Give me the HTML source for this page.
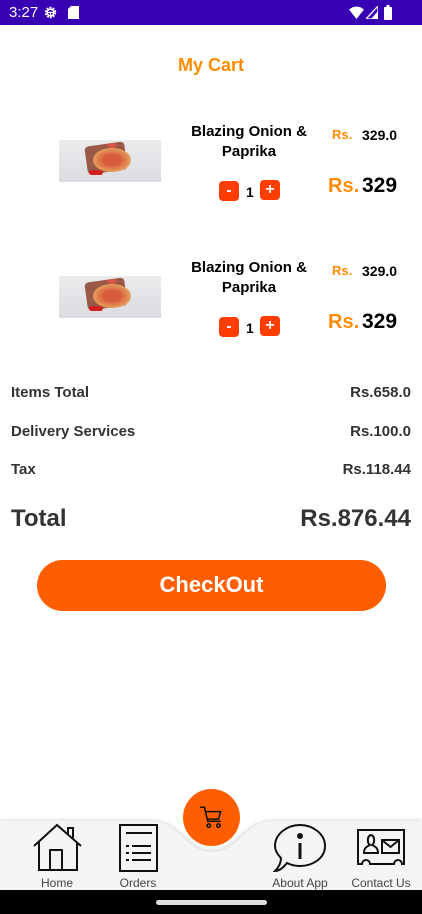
<!DOCTYPE html>
<html><head><meta charset="utf-8"><style>
*{margin:0;padding:0;box-sizing:border-box}
body{width:422px;height:914px;background:#fff;font-family:"Liberation Sans",Roboto,sans-serif;position:relative;overflow:hidden}
.a{position:absolute;white-space:nowrap}
.sb{left:0;top:0;width:422px;height:25px;background:#3700b3;color:#fff}
.name{width:140px;left:179px;text-align:center;font-weight:bold;font-size:15px;line-height:20px;color:#000}
.btn{width:20px;height:20px;background:#ff3d00;border-radius:4px;color:#fff;font-weight:bold;font-size:16px;text-align:center;line-height:19px}
.lbl{font-weight:bold;font-size:15px;color:#333}
.nl{font-size:12px;color:#444;text-align:center}
</style></head><body>
<div class="a sb">
 <span class="a" style="left:9px;top:4px;font-size:15px">3:27</span>
 <svg class="a" style="left:43px;top:5px" width="15" height="15" viewBox="0 0 16 16"><circle cx="8" cy="8" r="5" fill="none" stroke="#fff" stroke-width="2.2" stroke-dasharray="2 1.2"/><circle cx="8" cy="8" r="3.5" fill="none" stroke="#fff" stroke-width="1.5"/><path d="M5 8h6M8 8v3" stroke="#fff" stroke-width="1.3"/></svg>
 <svg class="a" style="left:68px;top:6px" width="11" height="13" viewBox="0 0 11 13"><path d="M3 0h8v13H0V3z" fill="#fff"/></svg>
 <svg class="a" style="left:349px;top:6px" width="15" height="13" viewBox="0 0 15 13"><path d="M0 3.5Q7.5-2.5 15 3.5L7.5 13z" fill="#fff"/></svg>
 <svg class="a" style="left:366px;top:6px" width="12" height="13" viewBox="0 0 12 13"><path d="M12 0V13H0z" fill="none" stroke="#fff" stroke-width="1.3"/><path d="M12 5V13H5z" fill="#fff"/></svg>
 <svg class="a" style="left:384px;top:5px" width="8" height="15" viewBox="0 0 8 15"><rect x="0" y="2" width="8" height="13" rx="1" fill="#fff"/><rect x="2.5" y="0" width="3" height="2" fill="#fff"/></svg>
</div>
<div class="a" style="left:0;top:55px;width:422px;text-align:center;color:#ff8c00;font-weight:bold;font-size:18px">My Cart</div>

<div class="a" style="left:0;top:0;width:422px;height:220px">
 <div class="a" style="left:59px;top:140px;width:102px;height:42px;background:linear-gradient(#ebebee,#dcdce0);overflow:hidden">
  <div class="a" style="left:27px;top:4px;width:40px;height:28px;background:#9a5a48;border-radius:4px;transform:rotate(-8deg)"></div>
  <div class="a" style="left:34px;top:8px;width:38px;height:24px;border-radius:50%;background:radial-gradient(#d85a3a 30%,#e8a860 75%)"></div>
  <div class="a" style="left:30px;top:30px;width:14px;height:5px;background:#d02020;border-radius:3px"></div>
  <div class="a" style="left:49px;top:3px;width:8px;height:5px;background:#e05040;border-radius:50%"></div>
 </div>
 <div class="a name" style="top:122px">Blazing Onion &amp;<br>Paprika</div>
 <span class="a" style="left:332px;top:127px;color:#ff8c00;font-weight:bold;font-size:13px">Rs.</span>
 <span class="a" style="left:362px;top:127px;font-size:14px;font-weight:bold;color:#000">329.0</span>
 <div class="a btn" style="left:219px;top:181px">-</div>
 <span class="a" style="left:246px;top:184px;font-size:14px;font-weight:bold">1</span>
 <div class="a btn" style="left:260px;top:180px">+</div>
 <span class="a" style="left:328px;top:175px;color:#ff8c00;font-weight:bold;font-size:20px">Rs.</span>
 <span class="a" style="left:362px;top:174px;font-size:21px;font-weight:bold;color:#000">329</span>
</div>
<div class="a" style="left:0;top:136px;width:422px;height:220px">
 <div class="a" style="left:59px;top:140px;width:102px;height:42px;background:linear-gradient(#ebebee,#dcdce0);overflow:hidden">
  <div class="a" style="left:27px;top:4px;width:40px;height:28px;background:#9a5a48;border-radius:4px;transform:rotate(-8deg)"></div>
  <div class="a" style="left:34px;top:8px;width:38px;height:24px;border-radius:50%;background:radial-gradient(#d85a3a 30%,#e8a860 75%)"></div>
  <div class="a" style="left:30px;top:30px;width:14px;height:5px;background:#d02020;border-radius:3px"></div>
  <div class="a" style="left:49px;top:3px;width:8px;height:5px;background:#e05040;border-radius:50%"></div>
 </div>
 <div class="a name" style="top:122px">Blazing Onion &amp;<br>Paprika</div>
 <span class="a" style="left:332px;top:127px;color:#ff8c00;font-weight:bold;font-size:13px">Rs.</span>
 <span class="a" style="left:362px;top:127px;font-size:14px;font-weight:bold;color:#000">329.0</span>
 <div class="a btn" style="left:219px;top:181px">-</div>
 <span class="a" style="left:246px;top:184px;font-size:14px;font-weight:bold">1</span>
 <div class="a btn" style="left:260px;top:180px">+</div>
 <span class="a" style="left:328px;top:175px;color:#ff8c00;font-weight:bold;font-size:20px">Rs.</span>
 <span class="a" style="left:362px;top:174px;font-size:21px;font-weight:bold;color:#000">329</span>
</div>

<span class="a lbl" style="left:11px;top:384px">Items Total</span><span class="a lbl" style="right:11px;top:384px">Rs.658.0</span>
<span class="a lbl" style="left:11px;top:423px">Delivery Services</span><span class="a lbl" style="right:11px;top:423px">Rs.100.0</span>
<span class="a lbl" style="left:11px;top:461px">Tax</span><span class="a lbl" style="right:11px;top:461px">Rs.118.44</span>
<span class="a lbl" style="left:11px;top:505px;font-size:24px">Total</span><span class="a lbl" style="right:11px;top:505px;font-size:24px">Rs.876.44</span>
<div class="a" style="left:37px;top:560px;width:349px;height:51px;border-radius:26px;background:#ff5e00;color:#fff;font-weight:bold;font-size:22px;text-align:center;line-height:50px">CheckOut</div>

<svg class="a" style="left:0;top:812px" width="422" height="78" viewBox="0 0 422 78">
 <defs><filter id="s" x="-10%" y="-50%" width="120%" height="200%"><feGaussianBlur stdDeviation="2"/></filter></defs>
 <path d="M0 10H150C180 10 185 40 212 40C239 40 244 10 274 10H422" fill="none" stroke="#ccc" stroke-width="3" filter="url(#s)"/>
 <path d="M0 9H150C180 9 185 40 212 40C239 40 244 9 274 9H422V78H0Z" fill="#f5f5f5"/>
</svg>
<div class="a" style="left:183px;top:789px;width:57px;height:57px;border-radius:50%;background:#ff5e00"></div>
<svg class="a" style="left:198px;top:803px" width="28" height="28" viewBox="0 0 26 26" fill="none" stroke="#111" stroke-width="1.4"><path d="M2 4h4l3 13h12M7 8h14l-2 7H9"/><circle cx="10" cy="21" r="1.6"/><circle cx="19" cy="21" r="1.6"/></svg>

<svg class="a" style="left:32px;top:823px" width="52" height="50" viewBox="0 0 52 50" fill="none" stroke="#111" stroke-width="2"><path d="M2 23L25 2L49 23M7 19V47H45V19M18 47V27H30V47M36 11V5H41V15"/></svg>
<svg class="a" style="left:118px;top:824px" width="42" height="48" viewBox="0 0 42 48" fill="none" stroke="#111" stroke-width="2"><rect x="2" y="1" width="37" height="46"/><path d="M8 9H34M8 22H11M14 22H33M8 29H11M14 29H33M8 36H11M14 36H33"/></svg>
<svg class="a" style="left:273px;top:823px" width="54" height="52" viewBox="0 0 54 52" fill="none" stroke="#111" stroke-width="2"><path d="M27 2C40 2 52 11 52 23C52 35 40 43 27 43C22 43 18 42 14 40C10 45 6 48 2 48C6 44 8 40 8 35C4 31 2 27 2 23C2 11 14 2 27 2Z"/><circle cx="27" cy="13" r="2" fill="#111"/><path d="M27 20V36" stroke-width="3"/></svg>
<svg class="a" style="left:356px;top:828px" width="50" height="40" viewBox="0 0 50 40" fill="none" stroke="#111" stroke-width="2"><path d="M2 2H48V36H46A4 4 0 0 0 38 36H14A4 4 0 0 0 6 36H2Z"/><path d="M8 25C8 19 12 18 14 17C11 15 11 8 15 7C19 8 19 15 16 17C18 18 22 19 22 25Z"/><rect x="26" y="12" width="17" height="13"/><path d="M26 12L34.5 19L43 12"/></svg>
<div class="a nl" style="left:27px;top:876px;width:60px">Home</div>
<div class="a nl" style="left:108px;top:876px;width:60px">Orders</div>
<div class="a nl" style="left:265px;top:876px;width:70px">About App</div>
<div class="a nl" style="left:343px;top:876px;width:76px">Contact Us</div>
<div class="a" style="left:0;top:890px;width:422px;height:24px;background:#000"></div>
<div class="a" style="left:156px;top:900px;width:111px;height:5px;border-radius:3px;background:#ddd"></div>
</body></html>
